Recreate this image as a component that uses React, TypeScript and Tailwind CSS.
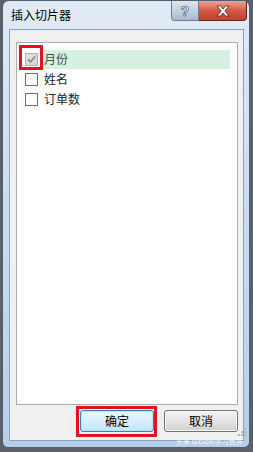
import React from "react";

const font = { fontFamily: '"Noto Sans CJK SC", "Noto Sans", sans-serif' };

function Check({ checked }: { checked?: boolean }) {
  if (checked) {
    return (
      <div className="w-[13px] h-[13px] border border-[#b1b1b1] bg-gradient-to-br from-[#e4e4e4] to-[#d2d2d2] flex items-center justify-center">
        <svg width="11" height="11" viewBox="0 0 11 11">
          <path d="M2 5.5 L4.5 8 L9 2.5" fill="none" stroke="#8d8d8d" strokeWidth="1.8" />
        </svg>
      </div>
    );
  }
  return <div className="w-[13px] h-[13px] border border-[#6f6f6f] bg-white" />;
}

function Row({ label, checked, active }: { label: string; checked?: boolean; active?: boolean }) {
  return (
    <div className="h-[20px] flex items-center">
      <Check checked={checked} />
      <div
        className={
          "ml-[5px] w-[187px] h-[19px] pl-[1px] flex items-center text-[12px] leading-none " +
          (active ? "bg-[#d6f0e2] text-[#4a4a4a]" : "text-[#222]")
        }
      >
        {label}
      </div>
    </div>
  );
}

export default function App() {
  return (
    <div className="relative w-[253px] h-[452px] bg-[#5c6168] overflow-hidden" style={font}>
      <div className="ml-[2px] w-[248px] h-[448px] rounded-t-[7px] rounded-b-[6px] border border-[#4f5f74] bg-gradient-to-b from-[#e2eaf4] via-[#c9dbef] to-[#b6cfea] flex flex-col">
        {/* title bar */}
        <div className="h-[28px] flex items-start shrink-0">
          <div className="pl-[8px] pt-[6px] text-[12px] leading-[16px] text-black flex-1">插入切片器</div>
          <div className="w-[28px] h-[20px] rounded-bl-[4px] border border-t-0 border-[#6d7d92] bg-gradient-to-b from-[#dfe6ee] via-[#c5d2e0] to-[#a9bacd] flex items-center justify-center">
            <span className="text-[14px] font-bold leading-none text-white" style={{ WebkitTextStroke: "0.6px #3a4452", fontFamily: '"Liberation Sans", sans-serif' }}>?</span>
          </div>
          <div className="w-[48px] h-[20px] mr-[2px] rounded-br-[4px] border border-t-0 border-l-0 border-[#5e2a22] bg-gradient-to-b from-[#e9a394] via-[#d35a45] to-[#c0402c] flex items-center justify-center">
            <svg width="14" height="12" viewBox="0 0 14 12">
              <path
                d="M1 1 H4.5 L7 4 L9.5 1 H13 L8.8 6 L13 11 H9.5 L7 8 L4.5 11 H1 L5.2 6 Z"
                fill="#ffffff"
                stroke="#5a2016"
                strokeWidth="0.8"
                strokeLinejoin="round"
              />
            </svg>
          </div>
        </div>
        {/* client */}
        <div className="ml-[6px] mr-[5px] h-[412px] border border-[#8da2bc] bg-[#f0f0f0] flex flex-col pl-[6px] pr-[5px] pt-[12px]">
          <div className="h-[363px] border border-[#adadad] bg-white pl-[8px] pt-[6px] flex flex-col">
            <Row label="月份" checked active />
            <Row label="姓名" />
            <Row label="订单数" />
          </div>
          <div className="mt-[5px] flex justify-end gap-[10px]">
            <button className="w-[74px] h-[22px] rounded-[3px] border border-[#3c7fb1] bg-gradient-to-b from-[#eaf6fd] via-[#d9f0fc] to-[#bee6fd] text-[12px] leading-none text-black shadow-[inset_0_0_0_1px_#b7e3fa]">
              确定
            </button>
            <button className="w-[74px] h-[22px] rounded-[3px] border border-[#707070] bg-gradient-to-b from-[#f2f2f2] via-[#e5e5e5] to-[#cfcfcf] text-[12px] leading-none text-black shadow-[inset_0_0_0_1px_#fbfbfb]">
              取消
            </button>
          </div>
        </div>
      </div>
      {/* red annotation boxes */}
      <div className="absolute left-[19px] top-[45px] w-[24px] h-[25px] border-[3px] border-[#e0141e]" />
      <div className="absolute left-[76px] top-[406px] w-[81px] h-[31px] border-[3px] border-[#e0141e]" />
      {/* watermark */}
      <div className="absolute left-[176px] top-[437px] text-[7px] leading-[9px] text-[#f4f7fb] whitespace-nowrap">头条 @Excel学习世界</div>
      {/* size grip */}
      <div className="absolute left-[238px] top-[428px] grid grid-cols-3 gap-[1px]">
        {[0, 0, 1, 0, 1, 1, 1, 1, 1].map((v, i) => (
          <div key={i} className={"w-[2px] h-[2px] " + (v ? "bg-[#b8b8b8]" : "bg-transparent")} />
        ))}
      </div>
    </div>
  );
}
